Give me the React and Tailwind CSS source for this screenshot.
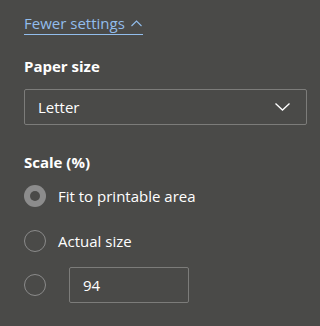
import { useState } from 'react';

const font = { fontFamily: '"Open Sans", "Noto Sans", sans-serif' };

const Radio = ({ checked, onClick }) => (
    <button
        onClick={onClick}
        className={`w-[22px] h-[22px] rounded-full shrink-0 flex items-center justify-center ${checked ? 'bg-[#8c8c8c]' : 'border border-[#8a8a8a]'
            }`}
    >
        {checked && <span className="w-[10px] h-[10px] rounded-full bg-[#4a4a48]" />}
    </button>
);

const App = () => {
    const [scale, setScale] = useState('fit');

    return (
        <div className="w-[320px] h-[326px] bg-[#4a4a48] text-white pl-6 pr-[13px] pt-[13px]" style={font}>
            {/* ── Toggle link ── */}
            <button className="flex items-center gap-[6px] text-[15px] leading-[20px] text-[#92bdec] border-b border-[#92bdec] pb-[1px] pr-[1px]">
                Fewer settings
                <svg width="11" height="7" viewBox="0 0 11 7" fill="none" stroke="currentColor" strokeWidth="1.1">
                    <path d="M0.5 6L5.5 1L10.5 6" />
                </svg>
            </button>

            {/* ── Paper size ── */}
            <h2 className="mt-[21px] text-[15px] leading-[20px] font-bold">Paper size</h2>
            <div className="mt-[13px] h-[36px] w-[283px] border border-[#7c7c7a] rounded-[2px] flex items-center justify-between pl-[13px] pr-[16px] text-[15px]">
                <span>Letter</span>
                <svg width="15" height="8" viewBox="0 0 15 8" fill="none" stroke="currentColor" strokeWidth="1.3">
                    <path d="M0.5 0.5L7.5 7L14.5 0.5" />
                </svg>
            </div>

            {/* ── Scale ── */}
            <h2 className="mt-[27px] text-[15px] leading-[20px] font-bold">Scale (%)</h2>
            <div className="mt-[13px] flex flex-col gap-[22px]">
                <label className="flex items-center gap-[12px] text-[15px]">
                    <Radio checked={scale === 'fit'} onClick={() => setScale('fit')} />
                    Fit to printable area
                </label>
                <label className="flex items-center gap-[12px] text-[15px]">
                    <Radio checked={scale === 'actual'} onClick={() => setScale('actual')} />
                    Actual size
                </label>
            </div>
            <div className="mt-[15px] flex items-center gap-[23px]">
                <Radio checked={scale === 'custom'} onClick={() => setScale('custom')} />
                <input
                    defaultValue="94"
                    className="w-[120px] h-[36px] border border-[#7c7c7a] rounded-[2px] bg-transparent pl-[13px] text-[15px] outline-none"
                    style={font}
                />
            </div>
        </div>
    );
};

export default App;
